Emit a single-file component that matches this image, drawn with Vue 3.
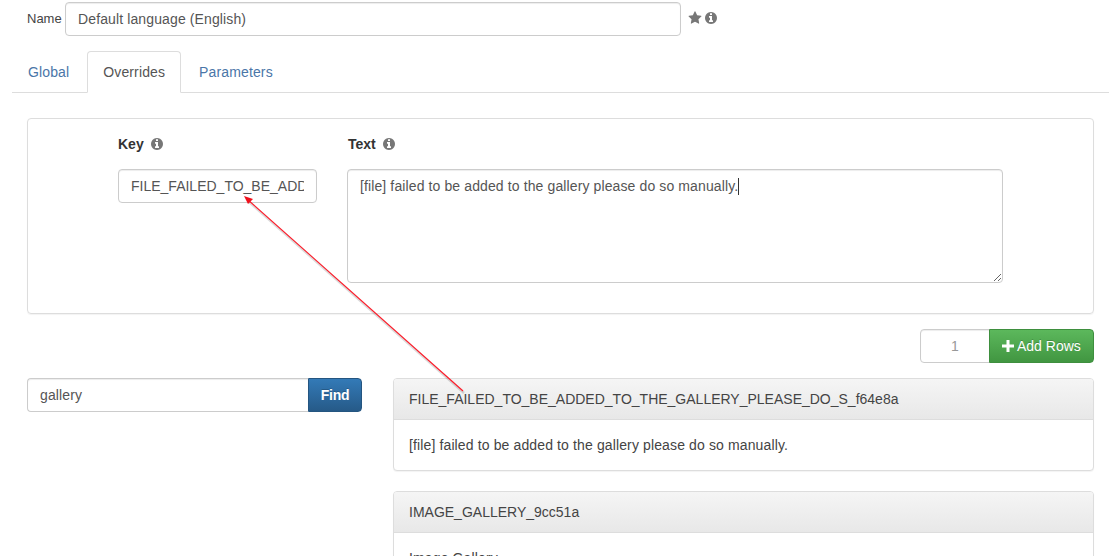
<script setup>
const infoPath = 'M1024 1376v-160q0-14-9-23t-23-9h-96v-512q0-14-9-23t-23-9h-320q-14 0-23 9t-9 23v160q0 14 9 23t23 9h96v320h-96q-14 0-23 9t-9 23v160q0 14 9 23t23 9h448q14 0 23-9t9-23zm-128-896v-160q0-14-9-23t-23-9h-192q-14 0-23 9t-9 23v160q0 14 9 23t23 9h192q14 0 23-9t9-23zm640 416q0 209-103 385.5t-279.5 279.5-385.5 103-385.5-103-279.5-279.5-103-385.5 103-385.5 279.5-279.5 385.5-103 385.5 103 279.5 279.5 103 385.5z'
const starPath = 'M1728 647q0 22-26 48l-363 354 86 500q1 7 1 20 0 21-10.5 35.5t-30.5 14.5q-19 0-40-12l-449-236-449 236q-22 12-40 12-21 0-31.5-14.5t-10.5-35.5q0-6 2-20l86-500-364-354q-25-27-25-48 0-37 56-46l502-73 225-455q19-41 49-41t49 41l225 455 502 73q56 9 56 46z'
const overrides = [
  { key: 'FILE_FAILED_TO_BE_ADDED_TO_THE_GALLERY_PLEASE_DO_S_f64e8a', text: '[file] failed to be added to the gallery please do so manually.' },
  { key: 'IMAGE_GALLERY_9cc51a', text: 'Image Gallery' }
]
</script>

<template>
  <div class="page">
    <div class="name-row">
      <label class="name-label">Name</label>
      <input class="field name-input" value="Default language (English)" />
      <svg class="icon star" viewBox="0 0 1792 1792"><path :d="starPath" /></svg>
      <svg class="icon info" viewBox="0 0 1536 1792"><path :d="infoPath" /></svg>
    </div>

    <ul class="tabs">
      <li class="tab">Global</li>
      <li class="tab active">Overrides</li>
      <li class="tab">Parameters</li>
    </ul>

    <section class="editor">
      <div class="editor-col key-col">
        <div class="col-label">Key <svg class="icon label-info" viewBox="0 0 1536 1792"><path :d="infoPath" /></svg></div>
        <input class="field key-input" value="FILE_FAILED_TO_BE_ADDED_TO_THE_GALLERY_PLEASE_DO_S_f64e8a" />
      </div>
      <div class="editor-col text-col">
        <div class="col-label">Text <svg class="icon label-info" viewBox="0 0 1536 1792"><path :d="infoPath" /></svg></div>
        <div class="area-wrap">
          <textarea class="field text-area">[file] failed to be added to the gallery please do so manually.</textarea>
          <span class="caret"></span>
        </div>
      </div>
    </section>

    <div class="add-row">
      <input class="field count-input" value="1" />
      <button class="btn btn-green">
        <svg class="plus" viewBox="0 0 12 12"><path d="M4.5 0h3v4.5H12v3H7.5V12h-3V7.5H0v-3h4.5z" /></svg>
        Add Rows
      </button>
    </div>

    <div class="results">
      <div class="search">
        <input class="field search-input" value="gallery" />
        <button class="btn btn-blue">Find</button>
      </div>
      <div class="list">
        <article v-for="item in overrides" :key="item.key" class="card">
          <header class="card-head">{{ item.key }}</header>
          <div class="card-body">{{ item.text }}</div>
        </article>
      </div>
    </div>

    <svg class="arrow" width="1119" height="556" viewBox="0 0 1119 556">
      <path d="M464 393 L248 201" stroke="#000" stroke-opacity=".14" stroke-width="2.5" fill="none" />
      <path d="M463 391 L247 199" stroke="#ff1a28" stroke-width="1.1" fill="none" />
      <path d="M244 196 L253 199 L248 204 Z" fill="#f0101c" />
    </svg>
  </div>
</template>

<style scoped>
.page {
  position: relative;
  height: 556px;
  overflow: hidden;
  padding-top: 2px;
  box-sizing: border-box;
  font-family: "Liberation Sans", Arial, sans-serif;
  font-size: 14px;
  color: #333;
  background: #fff;
}
.field {
  box-sizing: border-box;
  height: 34px;
  padding: 6px 12px;
  border: 1px solid #ccc;
  border-radius: 4px;
  background: #fff;
  color: #555;
  font: 14px/20px "Liberation Sans", Arial, sans-serif;
  box-shadow: inset 0 1px 1px rgba(0, 0, 0, .075);
  outline: none;
}
.icon { fill: #777; display: block; }
.name-row {
  display: flex;
  align-items: center;
  padding-left: 27px;
}
.name-label {
  width: 38px;
  font-size: 13px;
  margin-top: -2px;
  color: #444;
}
.name-input { width: 616px; letter-spacing: .12px; }
.star { width: 14px; height: 14px; margin: -3px 0 0 7px; }
.info { width: 12px; height: 14px; margin: -3px 0 0 3px; }
.tabs {
  display: flex;
  list-style: none;
  margin: 15px 10px 0 12px;
  padding: 0 0 0 1px;
  border-bottom: 1px solid #ddd;
  height: 41px;
  letter-spacing: .13px;
}
.tab {
  box-sizing: border-box;
  height: 42px;
  margin-right: 2px;
  padding: 10px 15px;
  line-height: 20px;
  color: #4a76a8;
  border: 1px solid transparent;
  border-radius: 4px 4px 0 0;
}
.tab:first-child { padding-left: 14px; padding-right: 15px; }
.tab.active {
  color: #555;
  background: #fff;
  border-color: #ddd #ddd #fff;
}
.editor {
  box-sizing: border-box;
  display: flex;
  height: 196px;
  margin: 25px 25px 0 27px;
  padding: 15px 0 0 90px;
  border: 1px solid #ddd;
  border-radius: 4px;
  box-shadow: 0 1px 1px rgba(0, 0, 0, .05);
}
.key-col { width: 229px; }
.col-label {
  display: flex;
  align-items: center;
  gap: 7px;
  height: 20px;
  margin-bottom: 15px;
  font-weight: 700;
  line-height: 20px;
}
.label-info { width: 12px; height: 14px; }
.key-input { width: 199px; }
.text-col .col-label { padding-left: 1px; }
.area-wrap { position: relative; width: 656px; height: 114px; }
.text-area {
  display: block;
  width: 656px;
  height: 114px;
  resize: vertical;
  letter-spacing: .115px;
}
.caret {
  position: absolute;
  left: 391px;
  top: 9px;
  width: 1px;
  height: 17px;
  background: #333;
}
.add-row {
  display: flex;
  justify-content: flex-end;
  margin: 15px 25px 0 0;
}
.count-input {
  width: 70px;
  margin-right: -1px;
  border-radius: 4px 0 0 4px;
  text-align: center;
  color: #999;
}
.btn {
  box-sizing: border-box;
  height: 34px;
  padding: 6px 12px;
  border: 1px solid;
  border-radius: 0 4px 4px 0;
  color: #fff;
  font: 14px/20px "Liberation Sans", Arial, sans-serif;
  text-shadow: 0 -1px 0 rgba(0, 0, 0, .2);
}
.btn-green {
  display: flex;
  align-items: center;
  gap: 3px;
  width: 105px;
  background: linear-gradient(#5cb85c, #419641);
  border-color: #3e8f3e;
}
.plus { width: 12px; height: 12px; fill: #fff; }
.btn-blue {
  width: 54px;
  padding: 6px 0;
  font-weight: 700;
  letter-spacing: -.2px;
  background: linear-gradient(#337ab7, #265a88);
  border-color: #245580;
}
.results {
  display: flex;
  align-items: flex-start;
  margin: 15px 25px 0 27px;
}
.search { display: flex; width: 335px; margin-right: 31px; }
.search-input {
  width: 281px;
  border-right: 0;
  border-radius: 4px 0 0 4px;
  letter-spacing: .12px;
}
.list { flex: 1; }
.card {
  margin-bottom: 20px;
  border: 1px solid #ddd;
  border-radius: 4px;
  background: #fff;
  box-shadow: 0 1px 1px rgba(0, 0, 0, .05);
  overflow: hidden;
}
.card-head {
  height: 41px;
  box-sizing: border-box;
  padding: 10px 15px;
  line-height: 20px;
  color: #444;
  background: linear-gradient(#f5f5f5, #e8e8e8);
  border-bottom: 1px solid #ddd;
}
.card-body {
  padding: 15px;
  line-height: 20px;
  height: 50px;
  box-sizing: border-box;
  color: #444;
  letter-spacing: .127px;
}
.arrow {
  position: absolute;
  left: 0;
  top: 0;
  pointer-events: none;
}
</style>

<style>
html, body { margin: 0; overflow: hidden; background: #fff; }
</style>
